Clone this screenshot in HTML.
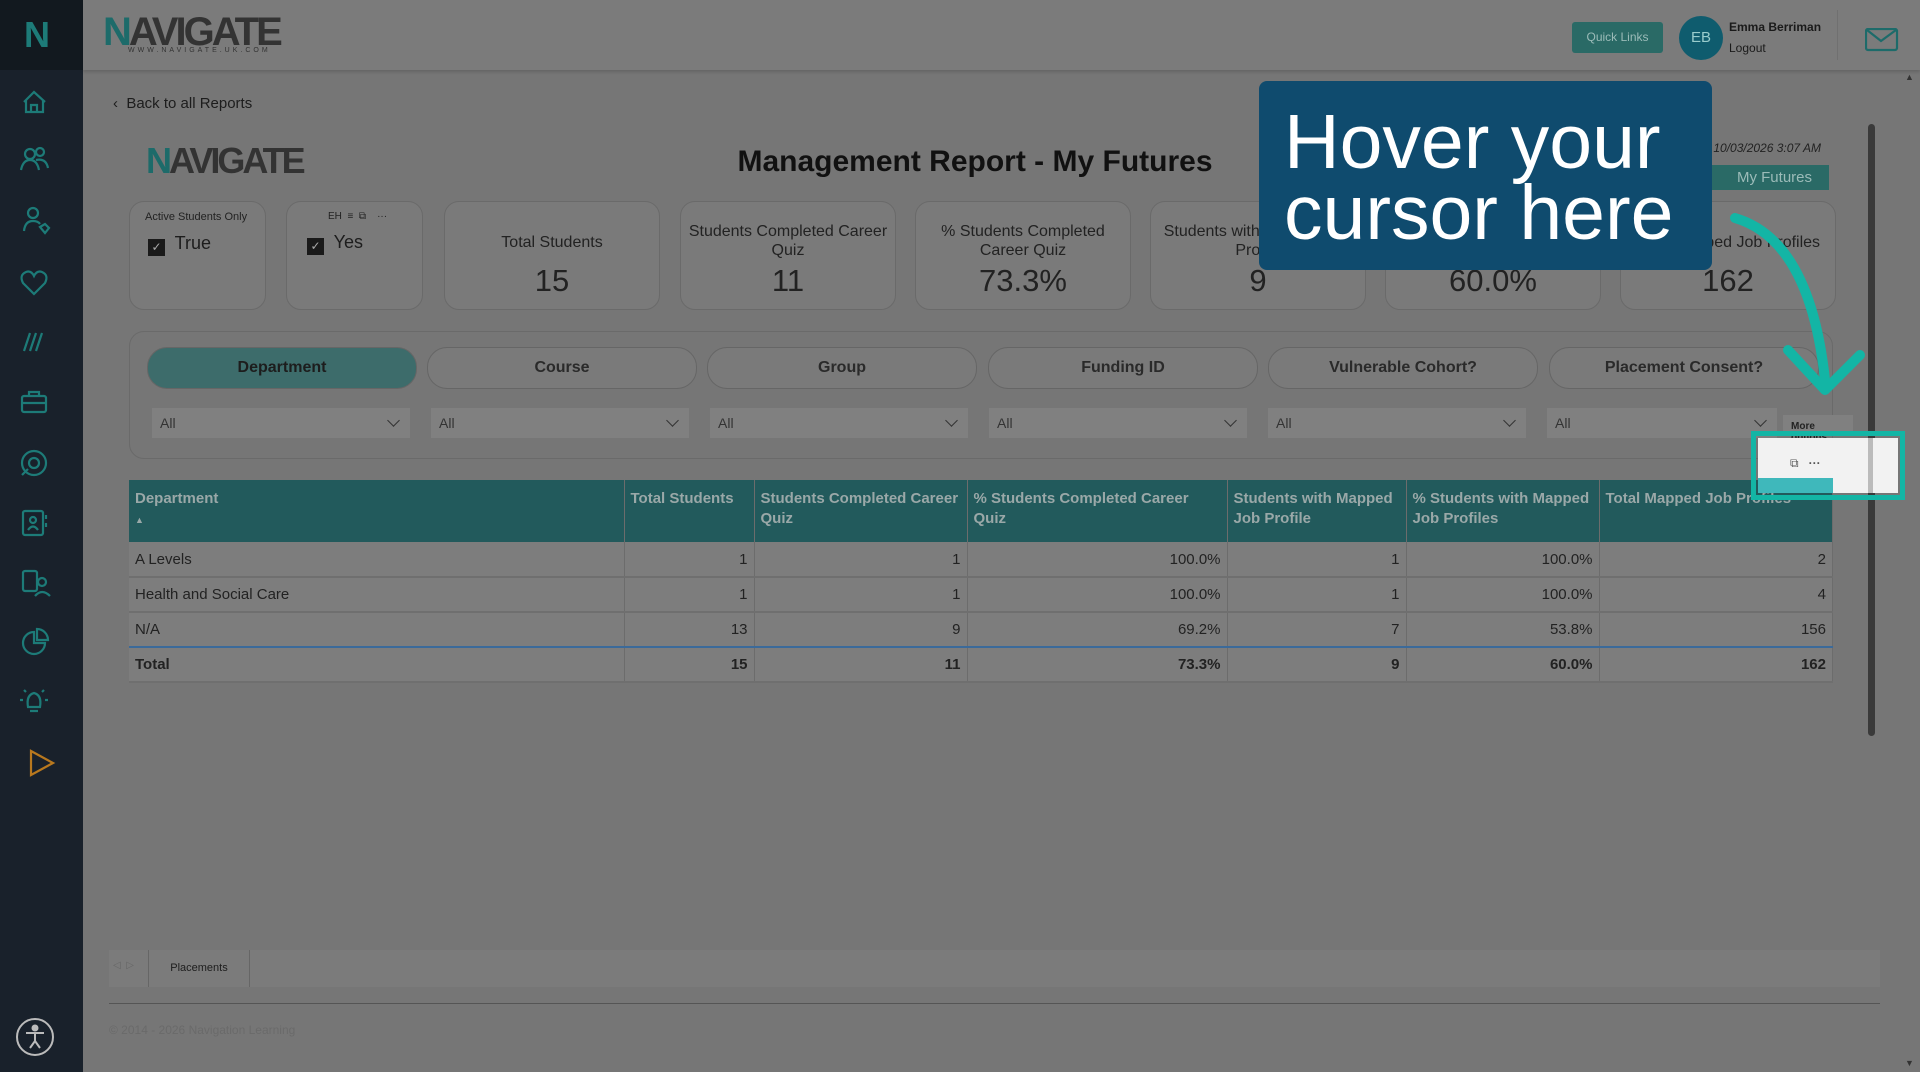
<!DOCTYPE html>
<html><head><meta charset="utf-8"><style>
*{box-sizing:border-box;margin:0;padding:0}
body{width:1920px;height:1072px;overflow:hidden;background:#767676;font-family:"Liberation Sans",sans-serif;color:#1d1d1d;position:relative}
.abs{position:absolute}
#side{left:0;top:0;width:83px;height:1072px;background:#19212b}
#side .top{left:0;top:0;width:83px;height:70px;background:#12191f}
#hdr{left:83px;top:0;width:1837px;height:70px;background:#7b7b7b;box-shadow:0 2px 3px rgba(0,0,0,.15)}
.logo{font-weight:bold;letter-spacing:-3px;color:#333}
.logo b{color:#1d6b6a}
.card{border:1px solid #6a6a6a;border-radius:15px;background:#7a7a7a;text-align:center}
.card .t{font-size:16px;margin-top:20px;line-height:19px;color:#222}
.card .v{font-size:31px;position:absolute;bottom:10px;left:0;right:0;color:#222}
.btn{border:1px solid #666;border-radius:20px;height:42px;width:270px;text-align:center;line-height:40px;font-weight:bold;font-size:16px;color:#2a2a2a;background:#7a7a7a}
.dd{height:30px;width:258px;background:#808080;font-size:14px;line-height:30px;padding-left:8px;color:#333}
.dd:after{content:"";position:absolute;right:12px;top:8px;width:8px;height:8px;border-right:1.5px solid #333;border-bottom:1.5px solid #333;transform:rotate(45deg)}
table{border-collapse:collapse;font-size:15px}
td,th{border-right:1px solid #6c6c6c;padding:0 6px}
th{background:#225a5c;color:#9aa8a8;text-align:left;vertical-align:top;padding-top:9px;font-size:15px;line-height:20px}
td{height:35px;text-align:right;border-bottom:2px solid #6f6f6f;background:#7d7d7d;color:#222}
td:first-child{text-align:left}
</style></head><body>
<div id="side" class="abs"><div class="top abs"></div>
<div class="abs" style="left:24px;top:14px;font-size:36px;font-weight:bold;color:#1d7b78">N</div>
<svg class="abs" style="left:0;top:80px" width="83" height="720" fill="none" stroke="#1d7b78" stroke-width="2.2">
<g transform="translate(0,-13)"><path d="M24 35 L34 25 L45 35 M26 33 V45 H43 V33 M31 45 V38 H37 V45"/></g>
<circle cx="30" cy="74" r="5"/><circle cx="40" cy="72" r="4"/><path d="M21 90 Q23 80 30 80 Q37 80 39 90 M36 80 Q46 78 48 88"/>
<circle cx="33" cy="133" r="5"/><path d="M24 151 Q25 141 33 141 Q38 141 40 144 M40 147 l5 -3 l4 4 l-4 5z"/>
<g transform="translate(0,9)"><path d="M34 205 L23 194 Q19 186 26 183 Q31 181 34 187 Q37 181 42 183 Q49 186 45 194z"/></g>
<g transform="translate(0,21)"><path d="M24 250 L30 232 M30 250 L36 232 M36 250 L42 232"/></g>
<g transform="translate(0,19)"><rect x="22" y="297" width="24" height="16" rx="2"/><path d="M29 297 V293 H39 V297 M22 304 H46"/></g>
<g transform="translate(0,23)"><circle cx="34" cy="360" r="12"/><circle cx="34" cy="360" r="5"/><path d="M22 372 L28 366"/></g>
<g transform="translate(0,23)"><rect x="23" y="408" width="20" height="24" rx="2"/><circle cx="33" cy="417" r="3"/><path d="M28 427 Q33 420 38 427 M46 412 v4 M46 420 v4"/></g>
<g transform="translate(0,24)"><rect x="23" y="467" width="14" height="20" rx="2"/><circle cx="42" cy="478" r="4"/><path d="M35 492 Q42 484 50 492"/></g>
<g transform="translate(0,29)"><path d="M34 523 A11 11 0 1 0 45 534 H34z M37 520 A11 11 0 0 1 48 531 H37z"/></g>
<g transform="translate(0,35)"><path d="M28 592 Q26 580 34 578 Q42 580 40 592 Z M30 596 H38 M20 585 h3 M45 585 h3 M24 575 l2 2 M44 575 l-2 2"/></g>
</svg>
<svg class="abs" style="left:28px;top:748px" width="30" height="30"><path d="M3 3 L25 15 L3 27Z" fill="none" stroke="#b8781e" stroke-width="2.2"/></svg>
<svg class="abs" style="left:15px;top:1017px" width="40" height="40" fill="none" stroke="#bbb" stroke-width="2"><circle cx="20" cy="20" r="18"/><circle cx="20" cy="11" r="2.5" fill="#bbb"/><path d="M11 16 H29 M20 16 V24 L15 31 M20 24 L25 31"/></svg>
</div>
<div id="hdr" class="abs">
<div class="abs logo" style="left:20px;top:10px;font-size:40px"><b>N</b>AVIGATE</div>
<div class="abs" style="left:45px;top:47px;font-size:7px;letter-spacing:3px;color:#333">WWW.NAVIGATE.UK.COM</div>
<div class="abs" style="left:1489px;top:22px;width:91px;height:31px;background:#2a6a66;border-radius:3px;color:#9bbbb8;font-size:12px;text-align:center;line-height:31px">Quick Links</div>
<div class="abs" style="left:1596px;top:16px;width:44px;height:44px;border-radius:50%;background:#0f5c6e;color:#9cc;text-align:center;line-height:44px;font-size:15px">EB</div>
<div class="abs" style="left:1646px;top:20px;font-size:12px;font-weight:bold;color:#1a1a1a">Emma Berriman</div>
<div class="abs" style="left:1646px;top:41px;font-size:12px;color:#1a1a1a">Logout</div>
<div class="abs" style="left:1754px;top:10px;width:1px;height:50px;background:#707070"></div>
<svg class="abs" style="left:1782px;top:28px" width="34" height="24" fill="none" stroke="#1d6b6a" stroke-width="2.2"><rect x="1" y="1" width="31" height="21" rx="2"/><path d="M2 2 L16 13 L31 2"/></svg>
</div>
<div class="abs" style="left:113px;top:95px;font-size:15px;color:#1d1d1d">&#8249;&nbsp; Back to all Reports</div>
<div class="abs logo" style="left:146px;top:140px;font-size:36px"><b>N</b>AVIGATE</div>
<div class="abs" style="left:650px;top:145px;width:650px;text-align:center;font-size:30px;font-weight:bold;color:#111">Management Report - My Futures</div>
<div class="abs" style="left:1700px;top:141px;font-size:12px;font-style:italic;color:#222">d: 10/03/2026 3:07 AM</div>
<div class="abs" style="left:1690px;top:165px;width:139px;height:25px;background:#2a6a66;color:#9bbbb8;text-align:center;line-height:25px;font-size:15px;padding-left:30px">My Futures</div>

<div class="abs card" style="left:129px;top:201px;width:137px;height:109px;text-align:left"><div style="font-size:11px;margin:9px 0 0 15px;color:#222">Active Students Only</div><div style="font-size:18px;margin:10px 0 0 18px"><span style="display:inline-block;width:17px;height:17px;background:#1a1a1a;color:#aaa;font-size:12px;text-align:center;line-height:17px;vertical-align:-2px">✓</span>&nbsp; True</div></div>
<div class="abs card" style="left:286px;top:201px;width:137px;height:109px;text-align:left"><div style="font-size:10px;margin:9px 0 0 41px;color:#222">EH &nbsp;≡ &nbsp;⧉ &nbsp;&nbsp;&nbsp;···</div><div style="font-size:18px;margin:10px 0 0 20px"><span style="display:inline-block;width:17px;height:17px;background:#1a1a1a;color:#aaa;font-size:12px;text-align:center;line-height:17px;vertical-align:-2px">✓</span>&nbsp; Yes</div></div>
<div class="abs card" style="left:444px;top:201px;width:216px;height:109px"><div class="t" style="margin-top:31px">Total Students</div><div class="v">15</div></div>
<div class="abs card" style="left:680px;top:201px;width:216px;height:109px"><div class="t">Students Completed Career<br>Quiz</div><div class="v">11</div></div>
<div class="abs card" style="left:915px;top:201px;width:216px;height:109px"><div class="t">% Students Completed<br>Career Quiz</div><div class="v">73.3%</div></div>
<div class="abs card" style="left:1150px;top:201px;width:216px;height:109px"><div class="t">Students with Mapped Job<br>Profile</div><div class="v">9</div></div>
<div class="abs card" style="left:1385px;top:201px;width:216px;height:109px"><div class="t">% Students with Mapped<br>Job Profiles</div><div class="v">60.0%</div></div>
<div class="abs card" style="left:1620px;top:201px;width:216px;height:109px"><div class="t" style="margin-top:31px">Total Mapped Job Profiles</div><div class="v">162</div></div>

<div class="abs" style="left:129px;top:331px;width:1704px;height:128px;border:1px solid #6a6a6a;border-radius:15px"></div>
<div class="abs btn" style="left:147px;top:347px;background:#3d6c6b;color:#1d1d1d">Department</div>
<div class="abs btn" style="left:427px;top:347px">Course</div>
<div class="abs btn" style="left:707px;top:347px">Group</div>
<div class="abs btn" style="left:988px;top:347px">Funding ID</div>
<div class="abs btn" style="left:1268px;top:347px">Vulnerable Cohort?</div>
<div class="abs btn" style="left:1549px;top:347px">Placement Consent?</div>
<div class="abs dd" style="left:152px;top:408px">All</div>
<div class="abs dd" style="left:431px;top:408px">All</div>
<div class="abs dd" style="left:710px;top:408px">All</div>
<div class="abs dd" style="left:989px;top:408px">All</div>
<div class="abs dd" style="left:1268px;top:408px">All</div>
<div class="abs dd" style="left:1547px;top:408px;width:230px">All</div>
<div class="abs" style="left:1783px;top:415px;width:70px;height:20px;background:#808080;font-size:10px;font-weight:bold;padding:6px 0 0 8px;color:#222">More options</div>

<table class="abs" style="left:129px;top:480px;width:1704px">
<tr style="height:62px"><th style="width:495px">Department<br><span style="font-size:9px">▲</span></th><th style="width:130px">Total Students</th><th style="width:213px">Students Completed Career Quiz</th><th style="width:260px">% Students Completed Career Quiz</th><th style="width:179px">Students with Mapped Job Profile</th><th style="width:193px">% Students with Mapped Job Profiles</th><th>Total Mapped Job Profiles</th></tr>
<tr><td>A Levels</td><td>1</td><td>1</td><td>100.0%</td><td>1</td><td>100.0%</td><td>2</td></tr>
<tr><td>Health and Social Care</td><td>1</td><td>1</td><td>100.0%</td><td>1</td><td>100.0%</td><td>4</td></tr>
<tr><td style="border-bottom:2px solid #3b6a9a">N/A</td><td style="border-bottom:2px solid #3b6a9a">13</td><td style="border-bottom:2px solid #3b6a9a">9</td><td style="border-bottom:2px solid #3b6a9a">69.2%</td><td style="border-bottom:2px solid #3b6a9a">7</td><td style="border-bottom:2px solid #3b6a9a">53.8%</td><td style="border-bottom:2px solid #3b6a9a">156</td></tr>
<tr style="font-weight:bold"><td>Total</td><td>15</td><td>11</td><td>73.3%</td><td>9</td><td>60.0%</td><td>162</td></tr>
</table>

<div class="abs" style="left:1868px;top:124px;width:7px;height:612px;background:#3a3a3a;border-radius:4px"></div>
<div class="abs" style="left:1905px;top:72px;font-size:9px;color:#333">▲</div>
<div class="abs" style="left:1905px;top:1058px;font-size:9px;color:#333">▼</div>
<div class="abs" style="left:109px;top:950px;width:1771px;height:37px;background:#7b7b7b"></div>
<div class="abs" style="left:113px;top:960px;font-size:10px;color:#666">◁ &nbsp;▷</div>
<div class="abs" style="left:148px;top:950px;width:102px;height:37px;border-left:1px solid #666;border-right:1px solid #666;font-size:11px;text-align:center;line-height:37px;color:#1d1d1d">Placements</div>
<div class="abs" style="left:109px;top:1003px;width:1771px;height:1px;background:#555"></div>
<div class="abs" style="left:109px;top:1023px;font-size:12px;color:#6a6a6a">© 2014 - 2026 Navigation Learning</div>

<div class="abs" style="left:1259px;top:81px;width:453px;height:189px;background:#0f4b6e;border-radius:8px;color:#fff;font-size:77px;line-height:71px;padding:26px 0 0 25px">Hover your<br>cursor here</div>
<svg class="abs" style="left:1700px;top:200px" width="200" height="200" fill="none" stroke="#13b5a5" stroke-width="10" stroke-linecap="round" stroke-linejoin="round"><path d="M35 18 Q110 40 125 180"/><path d="M88 150 L125 190 L160 155"/></svg>
<div class="abs" style="left:1751px;top:431px;width:154px;height:69px;border:5px solid #13b5a5"></div>
<div class="abs" style="left:1758px;top:438px;width:140px;height:55px;background:#f2f2f2"></div>
<div class="abs" style="left:1758px;top:478px;width:75px;height:15px;background:#3fb8bb"></div>
<div class="abs" style="left:1868px;top:438px;width:5px;height:55px;background:#bbb"></div>
<div class="abs" style="left:1790px;top:456px;font-size:12px;color:#555">⧉ &nbsp;&nbsp;<b>···</b></div>
</body></html>
